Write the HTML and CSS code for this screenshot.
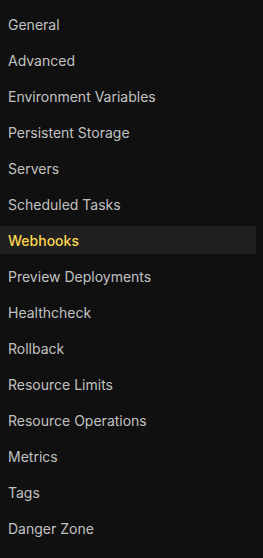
FILE: index.html
```html
<!DOCTYPE html>
<html lang="en">
<head>
    <meta charset="UTF-8">
    <meta name="viewport" content="width=device-width, initial-scale=1.0">
    <title>Settings</title>
    <link rel="stylesheet" href="styles.css">
</head>
<body>
    <nav class="menu">
        <a class="menu-item" href="#">General</a>
        <a class="menu-item" href="#">Advanced</a>
        <a class="menu-item" href="#">Environment Variables</a>
        <a class="menu-item" href="#">Persistent Storage</a>
        <a class="menu-item" href="#">Servers</a>
        <a class="menu-item" href="#">Scheduled Tasks</a>
        <a class="menu-item active" href="#">Webhooks</a>
        <a class="menu-item" href="#">Preview Deployments</a>
        <a class="menu-item" href="#">Healthcheck</a>
        <a class="menu-item" href="#">Rollback</a>
        <a class="menu-item" href="#">Resource Limits</a>
        <a class="menu-item" href="#">Resource Operations</a>
        <a class="menu-item" href="#">Metrics</a>
        <a class="menu-item" href="#">Tags</a>
        <a class="menu-item" href="#">Danger Zone</a>
    </nav>
</body>
</html>
```

FILE: styles.css
```css
/* Page */
body {
    margin: 0;
    background-color: #101010;
    font-family: Inter, "Noto Sans", sans-serif;
    height: 100vh;
}

/* Sidebar menu */
.menu {
    display: flex;
    flex-direction: column;
    gap: 8px;
    padding-top: 10px;
    width: 256px;
}

.menu-item {
    display: flex;
    align-items: center;
    height: 28px;
    padding-left: 8px;
    font-size: 14px;
    color: #c2c2c2;
    text-decoration: none;
}

.menu-item.active {
    background-color: #202020;
    color: #fcd452;
    font-weight: 500;
}
```
